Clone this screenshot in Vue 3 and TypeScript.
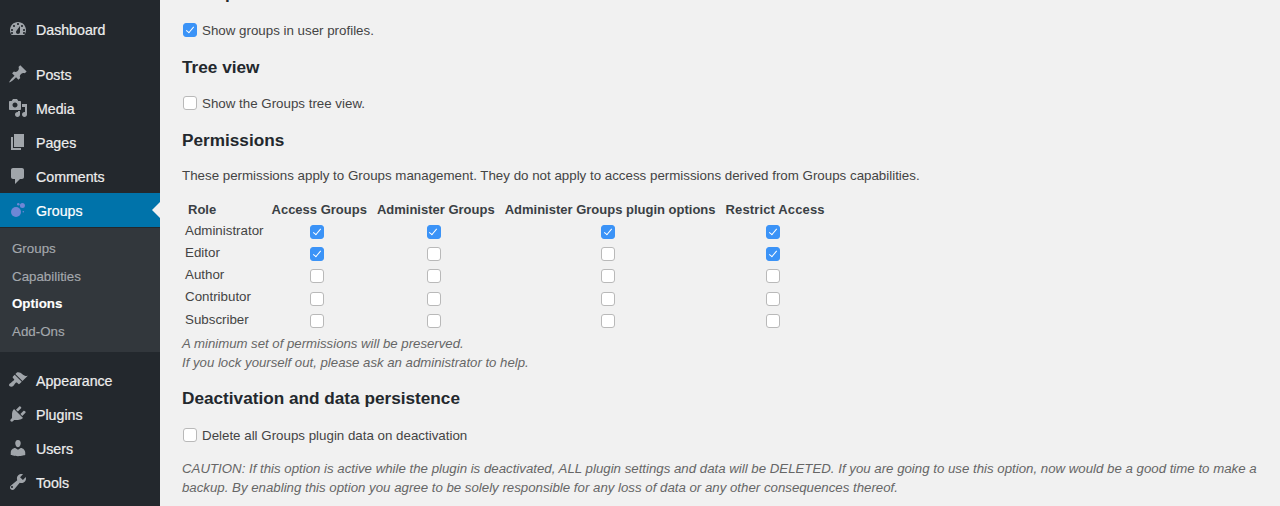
<script setup lang="ts">
interface MenuItem {
  label: string
  icon: string
}

const topMenu: MenuItem[] = [
  { label: 'Posts', icon: 'posts' },
  { label: 'Media', icon: 'media' },
  { label: 'Pages', icon: 'pages' },
  { label: 'Comments', icon: 'comments' },
]

const lowerMenu: MenuItem[] = [
  { label: 'Appearance', icon: 'appearance' },
  { label: 'Plugins', icon: 'plugins' },
  { label: 'Users', icon: 'users' },
  { label: 'Tools', icon: 'tools' },
]

const subMenu = ['Groups', 'Capabilities', 'Options', 'Add-Ons']

const permissions = ['Access Groups', 'Administer Groups', 'Administer Groups plugin options', 'Restrict Access']

const roles: { name: string; checks: boolean[] }[] = [
  { name: 'Administrator', checks: [true, true, true, true] },
  { name: 'Editor', checks: [true, false, false, true] },
  { name: 'Author', checks: [false, false, false, false] },
  { name: 'Contributor', checks: [false, false, false, false] },
  { name: 'Subscriber', checks: [false, false, false, false] },
]

const iconPaths: Record<string, string> = {
  dashboard: 'M3.76 16h12.48c1.1-1.37 1.76-3.11 1.76-5 0-4.42-3.58-8-8-8s-8 3.58-8 8c0 1.89.66 3.63 1.76 5zM10 4c.55 0 1 .45 1 1s-.45 1-1 1-1-.45-1-1 .45-1 1-1zM6 6c.55 0 1 .45 1 1s-.45 1-1 1-1-.45-1-1 .45-1 1-1zm8 0c.55 0 1 .45 1 1s-.45 1-1 1-1-.45-1-1 .45-1 1-1zm-5.37 5.55L12 7v6c0 1.1-.9 2-2 2s-2-.9-2-2c0-.57.24-1.08.63-1.45zM4 10c.55 0 1 .45 1 1s-.45 1-1 1-1-.45-1-1 .45-1 1-1zm12 0c.55 0 1 .45 1 1s-.45 1-1 1-1-.45-1-1 .45-1 1-1zm-12 3c.55 0 1 .45 1 1s-.45 1-1 1-1-.45-1-1 .45-1 1-1zm12 0c.55 0 1 .45 1 1s-.45 1-1 1-1-.45-1-1 .45-1 1-1z',
  posts: 'M10.44 3.02l1.82-1.82 6.36 6.35-1.83 1.82c-1.05-.68-2.48-.57-3.41.36l-.75.75c-.92.93-1.04 2.35-.35 3.41l-1.83 1.82-2.41-2.41-2.8 2.79c-.42.42-3.38 2.71-3.8 2.29s1.86-3.39 2.28-3.81l2.79-2.79L4.1 9.36l1.83-1.82c1.05.69 2.48.57 3.4-.36l.75-.75c.93-.92 1.05-2.35.36-3.41z',
  media: 'M13 11V4c0-.55-.45-1-1-1h-1.67L9 1H5L3.67 3H2c-.55 0-1 .45-1 1v7c0 .55.45 1 1 1h10c.55 0 1-.45 1-1zM7 4.5c1.38 0 2.5 1.12 2.5 2.5S8.38 9.5 7 9.5 4.5 8.38 4.5 7 5.62 4.5 7 4.5zM14 6h5v10.5c0 1.38-1.12 2.5-2.5 2.5S14 17.88 14 16.5s1.12-2.5 2.5-2.5c.17 0 .34.02.5.05V9h-3V6zm-4 8.05V13h2v3.5c0 1.38-1.12 2.5-2.5 2.5S7 17.88 7 16.5 8.12 14 9.5 14c.17 0 .34.02.5.05z',
  pages: 'M6 15V2h10v13H6zm-1 1h8v2H3V5h2v11z',
  comments: 'M5 2h9c1.1 0 2 .9 2 2v7c0 1.1-.9 2-2 2h-2l-5 5v-5H5c-1.1 0-2-.9-2-2V4c0-1.1.9-2 2-2z',
  appearance: 'M14.48 11.06L7.41 3.99l1.5-1.5c.5-.56 2.3-.47 3.51.32 1.21.8 1.43 1.28 2.91 2.1 1.18.64 2.45 1.26 4.45.85zm-.71.71L6.7 4.7 4.93 6.47c-.39.39-.39 1.02 0 1.41l1.06 1.06c.39.39.39 1.03 0 1.42-.6.6-1.43 1.11-2.21 1.69-.35.26-.7.53-1.01.84C1.43 13.23.4 14.95 1.43 16s2.78 1.03 3.78.04c.31-.31.58-.66.85-1.02.57-.78 1.08-1.61 1.69-2.21.39-.39 1.02-.39 1.41 0l1.06 1.06c.39.39 1.02.39 1.41 0z',
  plugins: 'M13.11 4.36L9.87 7.6 8 5.73l3.24-3.24c.35-.34 1.05-.2 1.56.32.52.51.66 1.21.31 1.55zm-8 1.77l.91-1.12 9.01 9.01-1.19.84c-.71.71-2.63 1.16-3.82 1.16H6.14L4.9 17.26c-.59.59-1.54.59-2.12 0-.59-.58-.59-1.53 0-2.12l1.24-1.24v-3.88c0-1.13.4-3.19 1.09-3.89zm7.26 3.97l3.24-3.24c.34-.35 1.04-.21 1.55.31.52.51.66 1.21.31 1.55l-3.24 3.25z',
  users: 'M10 9.25c-2.27 0-2.73-3.44-2.73-3.44C7 4.02 7.82 2 9.97 2c2.16 0 2.98 2.02 2.71 3.81 0 0-.41 3.44-2.68 3.44zm0 2.57L12.72 10c2.39 0 4.52 2.33 4.52 4.53v2.49s-3.65 1.13-7.24 1.13c-3.65 0-7.24-1.13-7.24-1.13v-2.49c0-2.25 1.94-4.48 4.47-4.48z',
  tools: 'M16.68 9.77c-1.34 1.34-3.3 1.67-4.95.99l-5.41 6.52c-.99.99-2.59.99-3.58 0s-.99-2.59 0-3.57l6.52-5.42c-.68-1.65-.35-3.61.99-4.95 1.28-1.28 3.12-1.62 4.72-1.06l-2.89 2.89 2.82 2.82 2.86-2.9c.56 1.6.22 3.46-1.08 4.68zM4.7 15.77c.39-.39.39-1.02 0-1.41s-1.02-.39-1.41 0-.39 1.02 0 1.41 1.02.39 1.41 0z',
}
</script>

<template>
  <div class="page">
    <nav class="sidebar">
      <ul class="menu first">
        <li class="item">
          <svg class="icon" viewBox="0 0 20 20"><path :d="iconPaths.dashboard" fill-rule="evenodd" /></svg>
          <span>Dashboard</span>
        </li>
      </ul>
      <ul class="menu gap">
        <li v-for="m in topMenu" :key="m.label" class="item">
          <svg class="icon" viewBox="0 0 20 20"><path :d="iconPaths[m.icon]" fill-rule="evenodd" /></svg>
          <span>{{ m.label }}</span>
        </li>
        <li class="item current">
          <svg class="icon" viewBox="0 0 20 20">
            <circle cx="8" cy="12" r="5" fill="#6f87d6" />
            <circle cx="14.4" cy="5.5" r="2.5" fill="#6f87d6" />
            <circle cx="10.3" cy="4.2" r="1.3" fill="#6f87d6" />
            <circle cx="15.3" cy="11.7" r=".8" fill="#6f87d6" />
          </svg>
          <span>Groups</span>
        </li>
      </ul>
      <ul class="submenu">
        <li v-for="s in subMenu" :key="s" :class="{ active: s === 'Options' }">{{ s }}</li>
      </ul>
      <ul class="menu lower">
        <li v-for="m in lowerMenu" :key="m.label" class="item">
          <svg class="icon" viewBox="0 0 20 20"><path :d="iconPaths[m.icon]" fill-rule="evenodd" /></svg>
          <span>{{ m.label }}</span>
        </li>
      </ul>
    </nav>

    <main class="content">
      <h3 class="cut">User profiles</h3>
      <label class="field first-field">
        <input type="checkbox" checked />
        <span>Show groups in user profiles.</span>
      </label>

      <h3 class="tree">Tree view</h3>
      <label class="field">
        <input type="checkbox" />
        <span>Show the Groups tree view.</span>
      </label>

      <h3 class="perm">Permissions</h3>
      <p class="intro">These permissions apply to Groups management. They do not apply to access permissions derived from Groups capabilities.</p>

      <table class="roles">
        <thead>
          <tr>
            <th>Role</th>
            <th v-for="p in permissions" :key="p">{{ p }}</th>
          </tr>
        </thead>
        <tbody>
          <tr v-for="r in roles" :key="r.name">
            <td class="name">{{ r.name }}</td>
            <td v-for="(c, i) in r.checks" :key="i" class="check">
              <input type="checkbox" :checked="c" />
            </td>
          </tr>
        </tbody>
      </table>

      <p class="note">A minimum set of permissions will be preserved.<br />If you lock yourself out, please ask an administrator to help.</p>

      <h3 class="deact">Deactivation and data persistence</h3>
      <label class="field">
        <input type="checkbox" />
        <span>Delete all Groups plugin data on deactivation</span>
      </label>
      <p class="caution">CAUTION: If this option is active while the plugin is deactivated, ALL plugin settings and data will be DELETED. If you are going to use this option, now would be a good time to make a backup. By enabling this option you agree to be solely responsible for any loss of data or any other consequences thereof.</p>
    </main>
  </div>
</template>

<style>
html,
body {
  margin: 0;
  background: #f1f1f1;
}
</style>

<style scoped>
.page {
  display: flex;
  width: 1280px;
  height: 506px;
  overflow: hidden;
  font-family: "Liberation Sans", Arial, sans-serif;
  font-size: 13.33px;
  color: #444;
  background: #f1f1f1;
}

.sidebar {
  width: 160px;
  flex: none;
  background: #23282d;
  padding-top: 12px;
  box-sizing: border-box;
}

ul {
  list-style: none;
  margin: 0;
  padding: 0;
}

.menu.gap {
  margin-top: 11px;
}

.item {
  position: relative;
  display: flex;
  align-items: center;
  height: 34px;
  font-size: 14.2px;
  color: #eee;
  -webkit-text-stroke: 0.2px currentColor;
}

.item span {
  margin-left: 36px;
  padding-top: 2px;
}

.icon {
  position: absolute;
  left: 8px;
  top: 7px;
  width: 20px;
  height: 20px;
  fill: #a0a5aa;
}

.item.current {
  background: #0073aa;
  color: #fff;
}

.item.current::after {
  content: '';
  position: absolute;
  right: 0;
  top: 50%;
  margin-top: -8px;
  border: 8px solid transparent;
  border-right-color: #f1f1f1;
  border-left-width: 0;
}

.submenu {
  margin-top: 1px;
  height: 124px;
  padding: 7px 0 0 12px;
  box-sizing: border-box;
  background: #32373c;
  color: #a4a8ad;
  line-height: 27.5px;
  -webkit-text-stroke: 0.15px currentColor;
}

.submenu .active {
  color: #fff;
  font-weight: 700;
}

.menu.lower {
  margin-top: 11px;
}

.content {
  flex: 1;
  min-width: 0;
  padding: 0 20px 0 22px;
}

h3 {
  margin: 0;
  font-size: 17.2px;
  line-height: 22px;
  color: #23282d;
}

.cut {
  margin-top: -18px;
}

.field {
  display: flex;
  align-items: center;
  height: 20px;
  color: #444;
}

.field span {
  margin-left: 5px;
  padding-top: 2px;
  line-height: 18px;
}

.first-field {
  margin-top: 16px;
}

.tree {
  margin-top: 16px;
}

.tree + .field {
  margin-top: 15px;
}

.perm {
  margin-top: 16px;
}

.intro {
  margin: 15px 0 0;
  line-height: 20px;
}

input[type='checkbox'] {
  appearance: none;
  position: relative;
  display: block;
  flex: none;
  width: 14px;
  height: 14px;
  background: #fff;
  border: 1px solid #b9b9b9;
  border-radius: 3px;
  box-sizing: border-box;
}

.field input[type='checkbox'] {
  margin: 0 0 0 1px;
}

input[type='checkbox']:checked {
  background: #3b93f7;
  border-color: #3b93f7;
}

input[type='checkbox']:checked::after {
  content: '';
  position: absolute;
  left: 3.6px;
  top: 1.4px;
  width: 3px;
  height: 7px;
  border: solid #fff;
  border-width: 0 1.4px 1.4px 0;
  transform: rotate(40deg);
}

.roles {
  border-collapse: collapse;
  margin-top: 13px;
  margin-left: 3px;
}

.roles th {
  padding: 0 5px;
  height: 20px;
  text-align: center;
  font-weight: 700;
  font-size: 13px;
  color: #3a3f44;
  white-space: nowrap;
}

.roles th:first-child {
  text-align: left;
  padding-left: 3px;
}

.roles th:last-child {
  letter-spacing: 0.14px;
}

.roles td {
  padding: 0;
  height: 22px;
}

.roles tbody tr:nth-child(4) td {
  height: 23px;
}

.roles td.name {
  padding-right: 3px;
  color: #444;
}

.roles td.check {
  padding: 0 9px 0 5px;
}

.check input[type='checkbox'] {
  margin: 4px auto 0;
}

.note,
.caution {
  font-style: italic;
  color: #666;
  line-height: 19px;
}

.note {
  margin: 4px 0 0;
  font-size: 13.2px;
}

.deact {
  margin-top: 15px;
}

.deact + .field {
  margin-top: 16px;
}

.caution {
  margin: 14px 0 0;
  font-size: 13.25px;
}
</style>
